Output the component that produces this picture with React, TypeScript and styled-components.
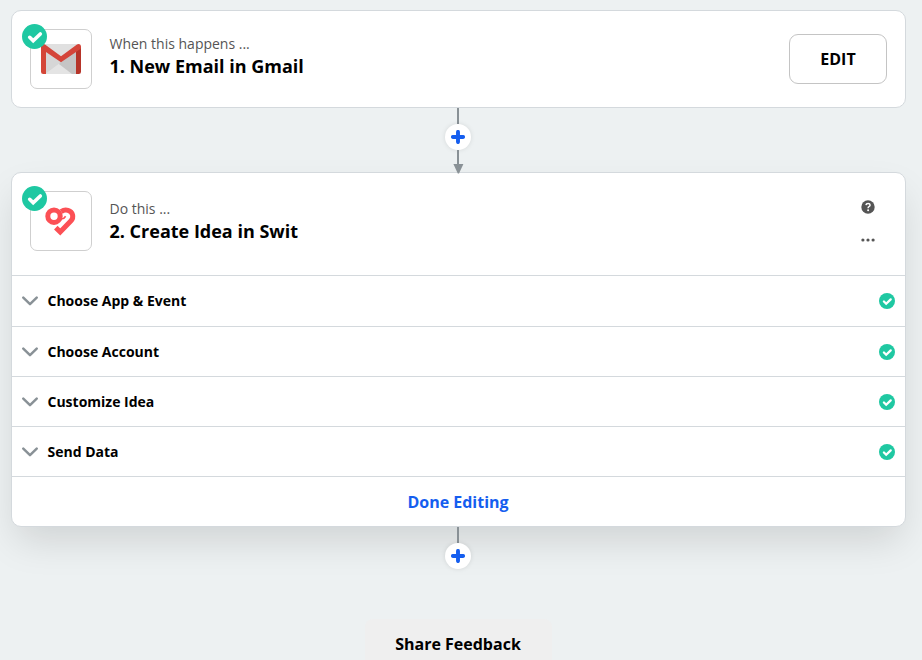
import React from "react";
import styled, { createGlobalStyle } from "styled-components";

const Global = createGlobalStyle`
  * { box-sizing: border-box; }
  body {
    margin: 0;
    height: 660px;
    overflow: hidden;
    background: #edf1f2;
    color: #000;
    font-family: "Open Sans", "Noto Sans", sans-serif;
  }
  button { font-family: inherit; margin: 0; padding: 0; border: 0; color: #000; }
  svg { display: block; flex: none; }
`;

const Page = styled.main`
  width: 895px;
  height: 660px;
  margin-left: 11px;
  padding-top: 10px;
  display: flex;
  flex-direction: column;
  align-items: center;
`;

const Card = styled.section<{ $raised?: boolean }>`
  width: 100%;
  flex: none;
  background: #fff;
  border: 1px solid #d4d9dd;
  border-radius: 10px;
  box-shadow: ${(p) => (p.$raised ? "0 18px 38px -5px rgba(0, 0, 0, 0.13)" : "none")};
`;

const Header = styled.header<{ $height: number }>`
  height: ${(p) => p.$height}px;
  padding: 18px 18px 0;
  display: flex;
  align-items: flex-start;
`;

const AppTile = styled.div`
  position: relative;
  width: 62px;
  height: 60px;
  flex: none;
  display: flex;
  align-items: center;
  justify-content: center;
  border: 1px solid #cfcfcf;
  border-radius: 7px;
`;

const TileBadge = styled.span`
  position: absolute;
  left: -9px;
  top: -6px;
`;

const Titles = styled.div<{ $offset: number }>`
  flex: 1;
  margin-left: 17.5px;
  padding-top: ${(p) => p.$offset}px;
`;

const Kicker = styled.p`
  margin: 0;
  font-size: 14px;
  line-height: 20px;
  color: #555;
`;

const Title = styled.h2`
  margin: 0;
  font-size: 18px;
  font-weight: 700;
  line-height: 24px;
`;

const EditButton = styled.button`
  width: 98px;
  height: 50px;
  margin-top: 5px;
  background: #fff;
  border: 1px solid #c4c4c4;
  border-radius: 9px;
  font-size: 16px;
  font-weight: 700;
`;

const Tools = styled.div`
  display: flex;
  flex-direction: column;
  align-items: center;
  gap: 19px;
  width: 14px;
  margin: 9px 12px 0 0;
`;

const Row = styled.div<{ $height: number }>`
  height: ${(p) => p.$height}px;
  padding: 0 10px;
  display: flex;
  align-items: center;
  border-top: 1px solid #d4d9dd;
`;

const RowLabel = styled.span`
  flex: 1;
  margin-left: 9.5px;
  font-size: 14px;
  font-weight: 700;
  line-height: 20px;
`;

const DoneButton = styled.button`
  display: block;
  width: 100%;
  height: 50px;
  padding-right: 1px;
  background: none;
  border-top: 1px solid #d4d9dd;
  font-size: 16px;
  font-weight: 700;
  color: #155eef;
`;

const Connector = styled.div<{ $height: number }>`
  position: relative;
  z-index: 1;
  width: 26px;
  height: ${(p) => p.$height}px;
  flex: none;
  display: flex;
  flex-direction: column;
  align-items: center;
  margin-right: 1px;
`;

const Line = styled.span<{ $length: number }>`
  width: 2px;
  height: ${(p) => p.$length}px;
  flex: none;
  background: #899196;
`;

const AddButton = styled.button`
  width: 26px;
  height: 26px;
  flex: none;
  display: flex;
  align-items: center;
  justify-content: center;
  background: #fff;
  border-radius: 50%;
  box-shadow: 0 0 5px rgba(0, 0, 0, 0.1);
`;

const FeedbackButton = styled.button`
  width: 187px;
  height: 50px;
  flex: none;
  margin: 50px 1px 0 0;
  background: #efefef;
  border-radius: 8px;
  font-size: 16px;
  font-weight: 700;
`;

const CheckIcon = ({ size }: { size: number }) => (
  <svg width={size} height={size} viewBox="0 0 25 25">
    <circle cx="12.5" cy="12.5" r="12.5" fill="#1fc8a2" />
    <path d="M7.7 13.3 11.2 16.8 18.3 10" fill="none" stroke="#fff" strokeWidth="3.6" strokeLinecap="round" strokeLinejoin="miter" />
  </svg>
);

const Plus = () => (
  <svg width="14" height="14" viewBox="0 0 14 14">
    <path d="M7 1.9V12.1M1.9 7H12.1" stroke="#155eef" strokeWidth="3.9" strokeLinecap="round" />
  </svg>
);

const Arrow = () => (
  <svg width="12" height="10" viewBox="0 0 12 10">
    <path d="M1.4 0H11.4L7 9.6H5.8Z" fill="#899196" />
  </svg>
);

const Chevron = () => (
  <svg width="16" height="10" viewBox="0 0 16 10">
    <path d="M1.3 1.6 8 8.1 14.7 1.6" fill="none" stroke="#899196" strokeWidth="2.5" strokeLinecap="round" strokeLinejoin="round" />
  </svg>
);

const GmailLogo = () => (
  <svg width="40" height="30" viewBox="0 0 40 30">
    <path d="M2.5 0H37.5V30H2.5Z" fill="#e0e0e0" />
    <path d="M5 7 20 18 5 30Z" fill="#d6d6d6" />
    <path d="M4 30 18 20 31 30Z" fill="#e4e4e4" />
    <path d="M20 17.5 35 7V30H31L18 20Z" fill="#c5c5c5" />
    <path d="M0 2.5H5V30H2.2Q0 30 0 27.8Z" fill="#d44638" />
    <path d="M35 2.5H40V27.8Q40 30 37.8 30H35Z" fill="#b63429" />
    <path d="M0 3Q0 0 2.5 0Q3.3 0 4 .6L20 12.2 36 .6Q36.7 0 37.5 0Q40 0 40 3Q40 4.5 38.7 5.5L20 18.3 1.3 5.5Q0 4.5 0 3Z" fill="#d4453a" />
  </svg>
);

const SwitLogo = () => (
  <svg width="32" height="32" viewBox="0 0 32 32">
    <g fill="none" stroke="#fc5055" strokeWidth="5">
      <circle cx="9" cy="11.2" r="6.2" />
      <path d="M16.2 6.6C18.2 5.2 20.6 4.7 23 5.4C28 7 29.2 12.2 26 15.8L15.2 26.9L10.8 22.6" strokeLinejoin="miter" />
      <path d="M14.8 11C15.4 14.2 18 15.2 20.6 11.2" strokeWidth="1.6" />
    </g>
  </svg>
);

const HelpIcon = () => (
  <svg width="14" height="14" viewBox="0 0 14 14">
    <circle cx="7" cy="7" r="6.7" fill="#555" />
    <path d="M4.9 5.2Q5.2 3.5 7.1 3.5T9.1 5.1Q9.1 6.1 8 6.6Q7.1 7 7.1 8.2" fill="none" stroke="#fff" strokeWidth="1.5" />
    <circle cx="7.1" cy="10.2" r="1" fill="#fff" />
  </svg>
);

const DotsIcon = () => (
  <svg width="14" height="14" viewBox="0 0 14 14" fill="#555">
    <circle cx="1.9" cy="7" r="1.6" />
    <circle cx="7" cy="7" r="1.6" />
    <circle cx="12.1" cy="7" r="1.6" />
  </svg>
);

const steps = [
  { label: "Choose App & Event", height: 51 },
  { label: "Choose Account", height: 50 },
  { label: "Customize Idea", height: 50 },
  { label: "Send Data", height: 50 },
];

export default function App() {
  return (
    <>
      <Global />
      <Page>
        <Card>
          <Header $height={96}>
            <AppTile>
              <GmailLogo />
              <TileBadge><CheckIcon size={25} /></TileBadge>
            </AppTile>
            <Titles $offset={5}>
              <Kicker>When this happens ...</Kicker>
              <Title>1. New Email in Gmail</Title>
            </Titles>
            <EditButton>EDIT</EditButton>
          </Header>
        </Card>
        <Connector $height={64}>
          <Line $length={16} />
          <AddButton aria-label="Add step"><Plus /></AddButton>
          <Line $length={14} />
          <Arrow />
        </Connector>
        <Card $raised>
          <Header $height={102}>
            <AppTile>
              <SwitLogo />
              <TileBadge><CheckIcon size={25} /></TileBadge>
            </AppTile>
            <Titles $offset={8}>
              <Kicker>Do this ...</Kicker>
              <Title>2. Create Idea in Swit</Title>
            </Titles>
            <Tools>
              <HelpIcon />
              <DotsIcon />
            </Tools>
          </Header>
          {steps.map((step) => (
            <Row key={step.label} $height={step.height}>
              <Chevron />
              <RowLabel>{step.label}</RowLabel>
              <CheckIcon size={16} />
            </Row>
          ))}
          <DoneButton>Done Editing</DoneButton>
        </Card>
        <Connector $height={42}>
          <Line $length={16} />
          <AddButton aria-label="Add step"><Plus /></AddButton>
        </Connector>
        <FeedbackButton>Share Feedback</FeedbackButton>
      </Page>
    </>
  );
}
